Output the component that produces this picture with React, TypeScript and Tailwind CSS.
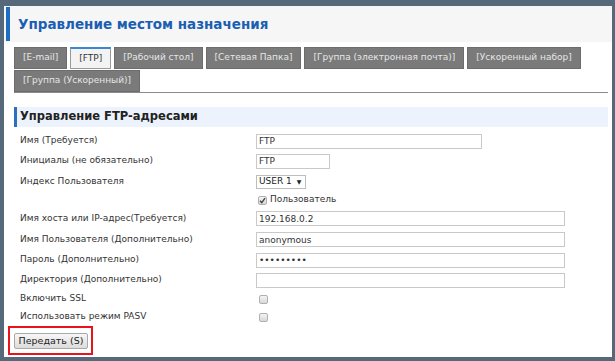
import React from 'react';

const tabs = [
  '[E-mail]',
  '[FTP]',
  '[Рабочий стол]',
  '[Сетевая Папка]',
  '[Группа (электронная почта)]',
  '[Ускоренный набор]',
  '[Группа (Ускоренный)]',
];

const Row: React.FC<{ label?: string; h: string; children?: React.ReactNode }> = ({ label, h, children }) => (
  <div className={`flex items-center ${h}`}>
    <div className="w-[242px] pl-[6px] text-[9px] text-[#333]">{label}</div>
    <div className="flex items-center">{children}</div>
  </div>
);

const TextBox: React.FC<{ w: string; value?: string; type?: string }> = ({ w, value = '', type = 'text' }) => (
  <input
    type={type}
    readOnly
    value={value}
    className={`${w} h-[15px] border border-[#c9c9c9] bg-white px-[2px] text-[9px] text-[#333] outline-none font-['DejaVu_Sans',sans-serif]`}
  />
);

const Check: React.FC<{ checked?: boolean }> = ({ checked }) => (
  <span className="w-[9px] h-[9px] rounded-[2px] border border-[#b0b0b0] bg-gradient-to-b from-[#f4f4f4] to-[#d8d8d8] flex items-center justify-center">
    {checked && (
      <svg width="7" height="7" viewBox="0 0 7 7">
        <path d="M1 3.8 L2.8 5.6 L6 1.2" stroke="#444" strokeWidth="1.4" fill="none" />
      </svg>
    )}
  </span>
);

export default function App() {
  return (
    <div className="w-[615px] h-[361px] bg-[#55697a] pt-[6px] pl-[4px] pr-[3px] pb-[4px] font-['DejaVu_Sans',sans-serif]">
      <div className="h-full bg-white flex flex-col">
        <div className="h-[36px] bg-[#f6f6f6] flex items-center pl-[2px]">
          <div className="w-[4px] h-[34px] bg-[#1d6dc1] mr-[8px]" />
          <h1 className="text-[13.5px] font-bold text-[#1a5fb2]">Управление местом назначения</h1>
        </div>

        <div className="ml-[10px] mr-[4px] flex flex-col">
          <div className="mt-[5px] flex flex-wrap gap-x-[3px] gap-y-px border-b border-[#8a8a8a]">
            {tabs.map((t) =>
              t === '[FTP]' ? (
                <div
                  key={t}
                  className="h-[22px] px-[8px] flex items-center text-[9px] text-[#333] bg-[#f3f3f3] border border-[#9a9a9a] border-t-2 border-t-[#3a86d2]"
                >
                  {t}
                </div>
              ) : (
                <div
                  key={t}
                  className="h-[22px] px-[8px] flex items-center text-[9px] text-[#e6e6e6] bg-[#7a7a7a] border border-[#6c6c6c]"
                >
                  {t}
                </div>
              )
            )}
          </div>

          <div className="mt-[14px] h-[20px] bg-[#ecf3fc] border-l-[3px] border-[#2c6fba] pl-[3px] flex items-center">
            <h2 className="text-[11.5px] font-bold text-[#222]">Управление FTP-адресами</h2>
          </div>

          <div className="mt-[4px] flex flex-col">
            <Row label="Имя (Требуется)" h="h-[20px]">
              <TextBox w="w-[226px]" value="FTP" />
            </Row>
            <Row label="Инициалы (не обязательно)" h="h-[20px]">
              <TextBox w="w-[74px]" value="FTP" />
            </Row>
            <Row label="Индекс Пользователя" h="h-[21px]">
              <div className="w-[50px] h-[14px] border border-[#bdbdbd] bg-white flex items-center pl-[2px] gap-[5px] text-[9px] text-[#222]">
                <span>USER 1</span>
                <span className="text-[6px]">▼</span>
              </div>
            </Row>
            <Row h="h-[16px]">
              <div className="flex items-center gap-[3px] pl-[2px] text-[9px] text-[#333]">
                <Check checked />
                <span>Пользователь</span>
              </div>
            </Row>
            <Row label="Имя хоста или IP-адрес(Требуется)" h="h-[21px]">
              <TextBox w="w-[309px]" value="192.168.0.2" />
            </Row>
            <Row label="Имя Пользователя (Дополнительно)" h="h-[21px]">
              <TextBox w="w-[309px]" value="anonymous" />
            </Row>
            <Row label="Пароль (Дополнительно)" h="h-[20px]">
              <TextBox w="w-[309px]" value="123456789" type="password" />
            </Row>
            <Row label="Директория (Дополнительно)" h="h-[20px]">
              <TextBox w="w-[309px]" />
            </Row>
            <Row label="Включить SSL" h="h-[18px]">
              <div className="pl-[3px]">
                <Check />
              </div>
            </Row>
            <Row label="Использовать режим PASV" h="h-[18px]">
              <div className="pl-[3px]">
                <Check />
              </div>
            </Row>
          </div>

          <div className="-ml-[6px] w-[85px] h-[29px] border-2 border-[#e8141b] pl-[4px] pt-[5px]">
            <button className="w-[74px] h-[16px] rounded-[2px] border border-[#a9a9a9] bg-gradient-to-b from-[#f7f7f7] to-[#dcdcdc] text-[9.5px] text-[#222] flex items-center justify-center font-['DejaVu_Sans',sans-serif]">
              Передать (S)
            </button>
          </div>
        </div>
      </div>
    </div>
  );
}
